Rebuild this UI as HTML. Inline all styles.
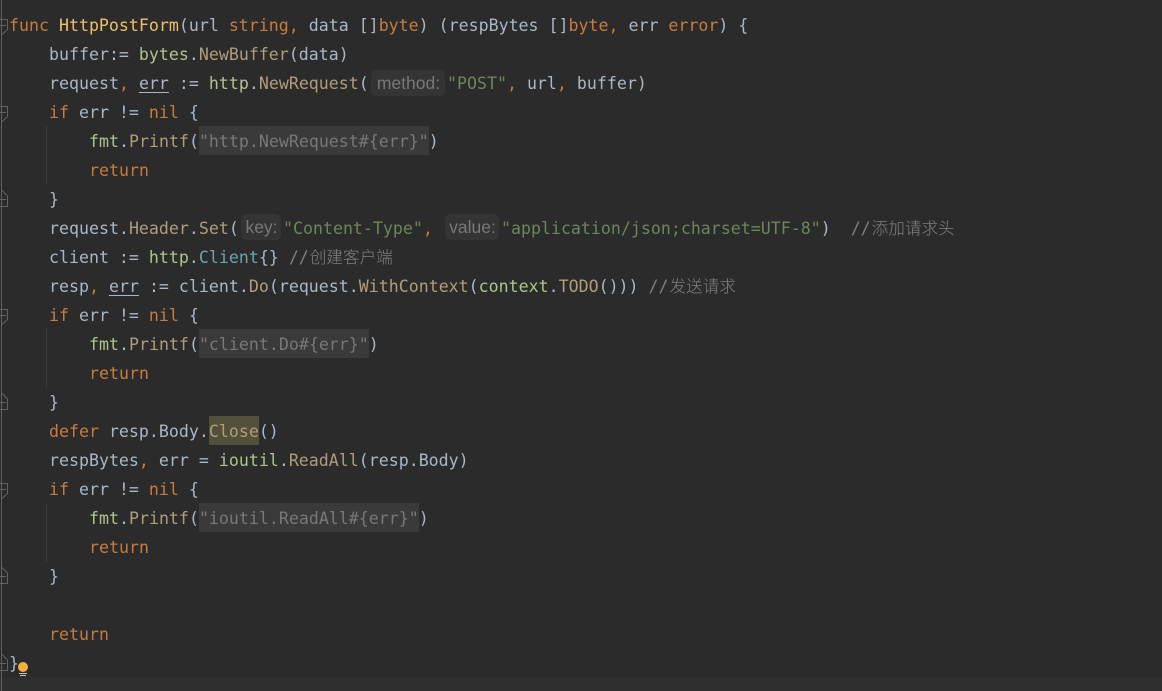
<!DOCTYPE html>
<html><head><meta charset="utf-8"><style>
html,body{margin:0;padding:0;background:#2b2b2b;}
#e{position:relative;width:1162px;height:691px;overflow:hidden;background:#2b2b2b;}
.l{position:absolute;height:29px;line-height:31px;margin-left:-1px;white-space:pre;font-family:"DejaVu Sans Mono","Liberation Mono","Noto Sans CJK SC",monospace;font-size:16.6px;color:#a9b7c6;}
.k{color:#c77c3e}.f{color:#eec06a}.p{color:#aec48a}.m{color:#b09d79}.s{color:#6a8759}.c{color:#808080}.t{color:#6aa3b2}
.g{background:#3a3a3a;color:#787878;display:inline-block;height:29px}
.cj{font-family:"Noto Sans CJK SC",sans-serif;font-size:16.6px;font-weight:300;position:relative;left:1px;line-height:0}
.u{text-decoration:underline;text-decoration-thickness:1px;text-underline-offset:3px}
.h{position:absolute;height:26px;line-height:27px;background:#343434;color:#787878;border-radius:5px;font-family:"Liberation Sans",sans-serif;font-size:17.5px;text-align:center;text-indent:1px}
.hl{background:#52503a;display:inline-block;height:29px}
</style></head><body><div id="e">
<div style="position:absolute;left:0;top:677px;width:1162px;height:14px;background:#2f2f2f"></div>
<svg width="60" height="691" style="position:absolute;left:0;top:0" fill="none" stroke="#626262" stroke-width="1">
<path d="M1.5 0V691"/>
<path d="M0 19.5H7.5V29.5L2 34.500M0 25.500H6"/>
<path d="M0 106.500H7.500V116.500L2 121.500M0 112.500H6"/>
<path d="M0 309.500H7.500V319.500L2 324.500M0 315.500H6"/>
<path d="M0 483.500H7.500V493.500L2 498.500M0 489.500H6"/>
<path d="M2 190.500L7.500 196V206.500H0M0 199.500H6"/>
<path d="M2 393.500L7.500 399V409.500H0M0 402.500H6"/>
<path d="M2 567.500L7.500 573V583.500H0M0 576.500H6"/>
<path d="M2 654.500L7.500 660V670.500H0M0 663.500H6"/>
<path stroke="#3c3c3c" d="M46.500 126V185M46.500 329V388M46.500 503V562"/>
<circle cx="23" cy="667" r="5" fill="#f4af3d" stroke="none"/>
<path stroke="#c8c8c8" d="M19 673.500H27M20 675.500H26"/>
</svg>
<div class="l" style="left:10px;top:10px"><span class="k">func</span> <span class="f">HttpPostForm</span>(url <span class="k">string,</span> data []<span class="k">byte</span>) (respBytes []<span class="k">byte,</span> err <span class="k">error</span>) {</div>
<div class="l" style="left:50px;top:39px">buffer:= <span class="p">bytes</span>.<span class="m">NewBuffer</span>(data)</div>
<div class="l" style="left:50px;top:68px">request<span class="k">,</span> <span class="u">err</span> := <span class="p">http</span>.<span class="m">NewRequest</span>(</div>
<div class="h" style="left:371px;top:70px;width:74px">method:</div>
<div class="l" style="left:448px;top:68px"><span class="s">"POST"</span><span class="k">,</span> url<span class="k">,</span> buffer)</div>
<div class="l" style="left:50px;top:97px"><span class="k">if</span> err != <span class="k">nil</span> {</div>
<div class="l" style="left:90px;top:126px"><span class="p">fmt</span>.<span class="m">Printf</span>(<span class="g">"http.NewRequest#{err}"</span>)</div>
<div class="l" style="left:90px;top:155px"><span class="k">return</span></div>
<div class="l" style="left:50px;top:184px">}</div>
<div class="l" style="left:50px;top:213px">request.<span class="m">Header</span>.<span class="m">Set</span>(</div>
<div class="h" style="left:241px;top:214px;width:40px">key:</div>
<div class="l" style="left:284px;top:213px"><span class="s">"Content-Type"</span><span class="k">,</span></div>
<div class="h" style="left:445px;top:214px;width:54px">value:</div>
<div class="l" style="left:502px;top:213px"><span class="s">"application/json;charset=UTF-8"</span>)  <span class="c">//<span class="cj">添加请求头</span></span></div>
<div class="l" style="left:50px;top:242px">client := <span class="p">http</span>.<span class="t">Client</span>{} <span class="c">//<span class="cj">创建客户端</span></span></div>
<div class="l" style="left:50px;top:271px">resp<span class="k">,</span> <span class="u">err</span> := client.<span class="m">Do</span>(request.<span class="m">WithContext</span>(<span class="p">context</span>.<span class="m">TODO</span>())) <span class="c">//<span class="cj">发送请求</span></span></div>
<div class="l" style="left:50px;top:300px"><span class="k">if</span> err != <span class="k">nil</span> {</div>
<div class="l" style="left:90px;top:329px"><span class="p">fmt</span>.<span class="m">Printf</span>(<span class="g">"client.Do#{err}"</span>)</div>
<div class="l" style="left:90px;top:358px"><span class="k">return</span></div>
<div class="l" style="left:50px;top:387px">}</div>
<div class="l" style="left:50px;top:416px"><span class="k">defer</span> resp.Body.<span class="m hl">Close</span>()</div>
<div class="l" style="left:50px;top:445px">respBytes<span class="k">,</span> err = <span class="p">ioutil</span>.<span class="m">ReadAll</span>(resp.Body)</div>
<div class="l" style="left:50px;top:474px"><span class="k">if</span> err != <span class="k">nil</span> {</div>
<div class="l" style="left:90px;top:503px"><span class="p">fmt</span>.<span class="m">Printf</span>(<span class="g">"ioutil.ReadAll#{err}"</span>)</div>
<div class="l" style="left:90px;top:532px"><span class="k">return</span></div>
<div class="l" style="left:50px;top:561px">}</div>
<div class="l" style="left:50px;top:619px"><span class="k">return</span></div>
<div class="l" style="left:10px;top:648px">}</div>
</div></body></html>
